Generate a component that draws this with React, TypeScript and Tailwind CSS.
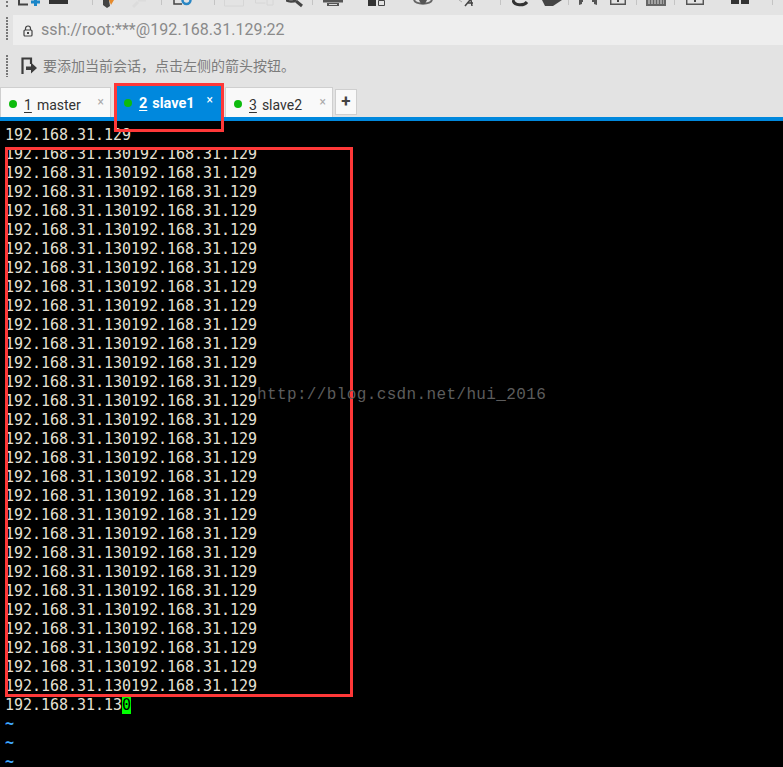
import React from 'react'

const sans = '[font-family:Roboto,"Noto_Sans_CJK_SC",sans-serif]'
const grip = 'w-[2px] bg-[repeating-linear-gradient(to_bottom,#777_0,#777_2px,transparent_2px,transparent_3px)]'

const ip = '192.168.31.130192.168.31.129'
const rows = Array.from({ length: 29 }, (_, i) => i)

const Sep = () => <div className="h-[5px] w-px self-start bg-[#c4c4c4]" />

function Icon({ w, ml = 0, children }: { w: number; ml?: number; children: React.ReactNode }) {
  return (
    <svg width={w} height={15} viewBox={`0 0 ${w} 15`} style={{ marginLeft: ml }} className="shrink-0">
      {children}
    </svg>
  )
}

// icons in the top strip are cut off by the window edge, only the bottom part shows
function Toolbar() {
  return (
    <div className="flex h-[15px] items-start overflow-hidden bg-[#e3e3e3]">
      <Icon w={2} ml={6}><path d="M0 1h2v2H0zM0 5h2v2H0z" fill="#777" /></Icon>
      <Icon w={22} ml={10}>
        <path d="M1 0v4.500h9" fill="none" stroke="#444" strokeWidth="2" />
        <path d="M13 2h9M17.500 0v6" stroke="#1a86c8" strokeWidth="3" />
      </Icon>
      <Icon w={20} ml={9}><path d="M0 0h19v4H0z" fill="#333" /></Icon>
      <div className="ml-[23px]"><Sep /></div>
      <Icon w={12} ml={9}>
        <path d="M1 0h6l1 6-3 2-4-3z" fill="#444" />
        <path d="M7 0h5L9 5z" fill="#e58a2c" />
      </Icon>
      <Icon w={15} ml={18}><path d="M1 7l5-5M6 0h8" stroke="#dcdcdc" strokeWidth="3" fill="none" /></Icon>
      <div className="ml-[14px]"><Sep /></div>
      <Icon w={19} ml={11}>
        <path d="M1 0v4h8" fill="none" stroke="#444" strokeWidth="1.500" />
        <circle cx="13.500" cy="0" r="4" fill="none" stroke="#2a86c4" strokeWidth="2.500" />
      </Icon>
      <div className="ml-[22px]"><Sep /></div>
      <Icon w={20} ml={9}><path d="M.5 0v6h19V0" fill="none" stroke="#d6d6d6" /></Icon>
      <Icon w={19} ml={11}><path d="M.5 0v3h10M12 0v5h6V0" fill="none" stroke="#d6d6d6" /></Icon>
      <Icon w={18} ml={12}>
        <path d="M0 0c2 2 8 2 10 0" fill="none" stroke="#444" strokeWidth="2.500" />
        <path d="M10 1l6 5" stroke="#444" strokeWidth="3" />
      </Icon>
      <div className="ml-[8px]"><Sep /></div>
      <Icon w={20} ml={10}>
        <path d="M0 0h20v2.500H0z" fill="#555" />
        <path d="M4 3h12v3H4z" fill="#555" />
        <path d="M6 4h8v1H6z" fill="#ddd" />
      </Icon>
      <Icon w={17} ml={25}>
        <path d="M0 0h8v6H0z" fill="#333" />
        <path d="M10.500 .5h6v5h-6z" fill="none" stroke="#444" />
      </Icon>
      <Icon w={20} ml={28}>
        <path d="M1 0c2 5 16 5 18 0" fill="none" stroke="#666" strokeWidth="2" />
        <path d="M6 0h8l-2 4H8z" fill="#555" />
      </Icon>
      <Icon w={20} ml={26}>
        <path d="M6 6l5-6M12 0l1 6M9 3h5" fill="none" stroke="#444" strokeWidth="1.500" />
        <path d="M0 0l3 2" stroke="#aaa" />
      </Icon>
      <div className="ml-[21px]"><Sep /></div>
      <Icon w={17} ml={11}>
        <path d="M1 0c1 6 11 6 14 2" fill="none" stroke="#333" strokeWidth="3" />
      </Icon>
      <Icon w={20} ml={13}><path d="M0 0h20l-9 6H3z" fill="#444" /></Icon>
      <div className="ml-[6px]"><Sep /></div>
      <Icon w={20} ml={9}>
        <path d="M1 0h4v2H4v2l-3 1zM14 0h5v5l-3-1V2h-2z" fill="#555" />
      </Icon>
      <Icon w={16} ml={12}>
        <path d="M.7 0v4.300h14.600V0" fill="none" stroke="#555" strokeWidth="1.500" />
        <path d="M7 0h2v2H7z" fill="#444" />
      </Icon>
      <div className="ml-[10px]"><Sep /></div>
      <Icon w={20} ml={9}>
        <path d="M0 0h20v6H0z" fill="#666" />
        <path d="M2 1h16M2 3h16" stroke="#ddd" strokeDasharray="2 1" />
      </Icon>
      <div className="ml-[8px]"><Sep /></div>
      <Icon w={18} ml={11}>
        <path d="M.7 0v4.300h16.600V0" fill="none" stroke="#555" strokeWidth="1.500" />
        <path d="M8 0h2v2H8z" fill="#444" />
      </Icon>
      <Icon w={18} ml={27}><path d="M0 0h8v4H0zM10 0h8v4h-8z" fill="#333" /></Icon>
      <div className="ml-[23px]"><Sep /></div>
      <Icon w={3} ml={9}><path d="M3 0v4" stroke="#555" strokeWidth="2" /></Icon>
    </div>
  )
}

function AddressBar() {
  return (
    <div className="flex h-[30px] bg-[#e3e3e3]">
      <div className={`mt-[2px] ml-[6px] h-[23px] ${grip}`} />
      <div className={`ml-[5px] flex flex-1 items-center bg-[#eeeeee] pl-[10px] text-[16px] tracking-[0.06px] text-[#8a8a8a] ${sans}`}>
        <svg width="10" height="12" viewBox="0 0 10 12" className="mt-[2px] mr-[8px] text-[#444]">
          <path d="M2.500 5V3.500a2.500 2.500 0 0 1 5 0V5" fill="none" stroke="currentColor" strokeWidth="1.200" />
          <rect x="1" y="5" width="8" height="6" rx="1" fill="none" stroke="currentColor" strokeWidth="1.200" />
          <rect x="4" y="7" width="2" height="2" fill="currentColor" />
        </svg>
        ssh://root:***@192.168.31.129:22
      </div>
    </div>
  )
}

function HintBar() {
  return (
    <div className={`flex h-[42px] items-center bg-[#e3e3e3] text-[14px] text-[#7c7c7c] ${sans}`}>
      <div className={`ml-[6px] h-[22px] ${grip}`} />
      <svg width="16" height="18" viewBox="0 0 16 18" className="mr-[6px] ml-[13px]">
        <path d="M1.500 17V1.500h8.500V7" fill="none" stroke="#3c3c3c" strokeWidth="2.200" />
        <path d="M5 9.500h5V5.500l6 5.500-6 5.500V13H5z" fill="#3c3c3c" />
      </svg>
      要添加当前会话，点击左侧的箭头按钮。
    </div>
  )
}

function Tab({ num, name, active, className }: { num: string; name: string; active?: boolean; className?: string }) {
  return (
    <div
      className={`relative flex items-center ${sans} ${className} ${
        active
          ? 'h-[31px] bg-[#0088dd] pl-[10px] text-[14.5px] font-bold text-white'
          : 'h-[30px] border border-b-0 border-[#cfcfcf] bg-[#f9f9f9] pl-[8px] text-[14px] text-[#333]'
      }`}
    >
      <span className="mt-[2px] mr-[7px] size-[8px] rounded-full bg-[#0dbb0d]" />
      <span className="pt-[5px] underline underline-offset-2">{num}</span>
      <span className="ml-[5px] pt-[5px]">{name}</span>
      <span className={`absolute top-[5px] text-[12px] font-normal ${active ? 'right-[9px] text-white' : 'right-[6px] text-[#aaa]'}`}>×</span>
    </div>
  )
}

function TabStrip() {
  return (
    <div className="flex h-[34px] items-end border-b-[4px] border-[#0088dd] bg-[#e3e3e3]">
      <Tab num="1" name="master" className="w-[111px]" />
      <Tab num="2" name="slave1" active className="ml-[3px] w-[108px]" />
      <Tab num="3" name="slave2" className="ml-[3px] w-[108px]" />
      <div className={`mb-[2px] ml-[2px] flex h-[26px] w-[22px] items-center justify-center border border-[#cfcfcf] bg-[#f9f9f9] text-[17px] font-bold text-[#444] ${sans}`}>
        +
      </div>
    </div>
  )
}

function Terminal() {
  return (
    <div className="relative flex-1 overflow-hidden bg-black pl-[5px] font-['DejaVu_Sans_Mono',monospace] text-[15px] leading-[19px] tracking-[-0.03px] text-[#e6e0d4]">
      <div className="pt-[5px]">192.168.31.129</div>
      {rows.map(i => (
        <div key={i}>{ip}</div>
      ))}
      <div>
        192.168.31.13<span className="bg-[#00ff00] text-black">0</span>
      </div>
      <div className="font-bold text-[#3fa9ff]">~</div>
      <div className="font-bold text-[#3fa9ff]">~</div>
      <div className="font-bold text-[#3fa9ff]">~</div>
      {/* annotation box and watermark sit over the terminal */}
      <div className="absolute top-[26px] left-[5px] h-[550px] w-[348px] border-[3px] border-[#ff3838]" />
      <div className="absolute top-[265px] left-[257px] font-['Liberation_Mono',monospace] text-[16px] tracking-[0.37px] text-[#5c5c5c]">
        http://blog.csdn.net/hui_2016
      </div>
    </div>
  )
}

export default function App() {
  return (
    <div className="relative flex h-[767px] w-[783px] flex-col overflow-hidden">
      <Toolbar />
      <AddressBar />
      <HintBar />
      <TabStrip />
      <Terminal />
      <div className="absolute top-[83px] left-[114px] h-[49px] w-[110px] border-[3px] border-[#ff3838]" />
    </div>
  )
}
